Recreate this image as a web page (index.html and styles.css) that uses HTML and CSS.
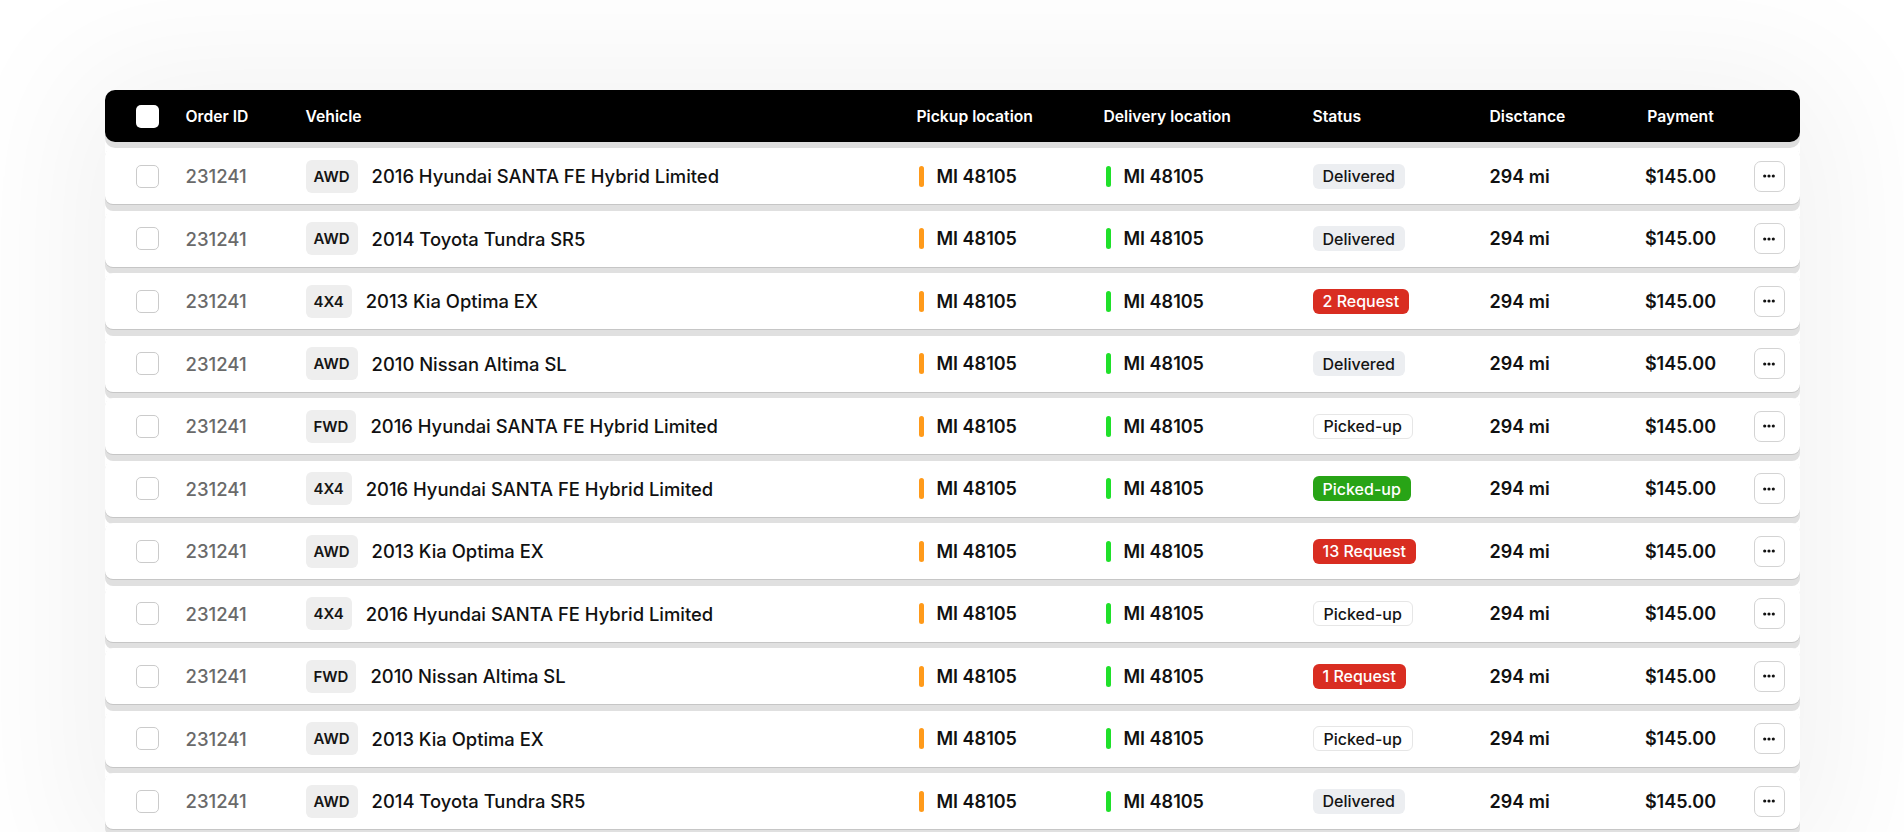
FILE: index.html
```html
<!DOCTYPE html>
<html lang="en">
<head>
<meta charset="utf-8">
<title>Orders</title>
<link rel="stylesheet" href="styles.css">
</head>
<body>
<div class="table">
  <div class="thead grid">
    <div class="cell"><span class="check check-head"></span></div>
    <div class="cell">Order ID</div>
    <div class="cell">Vehicle</div>
    <div class="cell">Pickup location</div>
    <div class="cell">Delivery location</div>
    <div class="cell">Status</div>
    <div class="cell">Disctance</div>
    <div class="cell center">Payment</div>
    <div class="cell"></div>
  </div>

  <div class="row grid">
    <div class="cell"><span class="check"></span></div>
    <div class="cell id">231241</div>
    <div class="cell vehicle"><span class="drive">AWD</span><span class="model">2016 Hyundai SANTA FE Hybrid Limited</span></div>
    <div class="cell loc"><span class="bar bar-pickup"></span>MI 48105</div>
    <div class="cell loc"><span class="bar bar-delivery"></span>MI 48105</div>
    <div class="cell"><span class="status status-delivered">Delivered</span></div>
    <div class="cell val">294 mi</div>
    <div class="cell val center">$145.00</div>
    <div class="cell end"><button class="more"><svg width="12" height="4" viewBox="0 0 12 4"><circle cx="1.7" cy="2" r="1.6"/><circle cx="6" cy="2" r="1.6"/><circle cx="10.3" cy="2" r="1.6"/></svg></button></div>
  </div>

  <div class="row grid">
    <div class="cell"><span class="check"></span></div>
    <div class="cell id">231241</div>
    <div class="cell vehicle"><span class="drive">AWD</span><span class="model">2014 Toyota Tundra SR5</span></div>
    <div class="cell loc"><span class="bar bar-pickup"></span>MI 48105</div>
    <div class="cell loc"><span class="bar bar-delivery"></span>MI 48105</div>
    <div class="cell"><span class="status status-delivered">Delivered</span></div>
    <div class="cell val">294 mi</div>
    <div class="cell val center">$145.00</div>
    <div class="cell end"><button class="more"><svg width="12" height="4" viewBox="0 0 12 4"><circle cx="1.7" cy="2" r="1.6"/><circle cx="6" cy="2" r="1.6"/><circle cx="10.3" cy="2" r="1.6"/></svg></button></div>
  </div>

  <div class="row grid">
    <div class="cell"><span class="check"></span></div>
    <div class="cell id">231241</div>
    <div class="cell vehicle"><span class="drive">4X4</span><span class="model">2013 Kia Optima EX</span></div>
    <div class="cell loc"><span class="bar bar-pickup"></span>MI 48105</div>
    <div class="cell loc"><span class="bar bar-delivery"></span>MI 48105</div>
    <div class="cell"><span class="status status-request">2 Request</span></div>
    <div class="cell val">294 mi</div>
    <div class="cell val center">$145.00</div>
    <div class="cell end"><button class="more"><svg width="12" height="4" viewBox="0 0 12 4"><circle cx="1.7" cy="2" r="1.6"/><circle cx="6" cy="2" r="1.6"/><circle cx="10.3" cy="2" r="1.6"/></svg></button></div>
  </div>

  <div class="row grid">
    <div class="cell"><span class="check"></span></div>
    <div class="cell id">231241</div>
    <div class="cell vehicle"><span class="drive">AWD</span><span class="model">2010 Nissan Altima SL</span></div>
    <div class="cell loc"><span class="bar bar-pickup"></span>MI 48105</div>
    <div class="cell loc"><span class="bar bar-delivery"></span>MI 48105</div>
    <div class="cell"><span class="status status-delivered">Delivered</span></div>
    <div class="cell val">294 mi</div>
    <div class="cell val center">$145.00</div>
    <div class="cell end"><button class="more"><svg width="12" height="4" viewBox="0 0 12 4"><circle cx="1.7" cy="2" r="1.6"/><circle cx="6" cy="2" r="1.6"/><circle cx="10.3" cy="2" r="1.6"/></svg></button></div>
  </div>

  <div class="row grid">
    <div class="cell"><span class="check"></span></div>
    <div class="cell id">231241</div>
    <div class="cell vehicle"><span class="drive">FWD</span><span class="model">2016 Hyundai SANTA FE Hybrid Limited</span></div>
    <div class="cell loc"><span class="bar bar-pickup"></span>MI 48105</div>
    <div class="cell loc"><span class="bar bar-delivery"></span>MI 48105</div>
    <div class="cell"><span class="status status-outline">Picked-up</span></div>
    <div class="cell val">294 mi</div>
    <div class="cell val center">$145.00</div>
    <div class="cell end"><button class="more"><svg width="12" height="4" viewBox="0 0 12 4"><circle cx="1.7" cy="2" r="1.6"/><circle cx="6" cy="2" r="1.6"/><circle cx="10.3" cy="2" r="1.6"/></svg></button></div>
  </div>

  <div class="row grid">
    <div class="cell"><span class="check"></span></div>
    <div class="cell id">231241</div>
    <div class="cell vehicle"><span class="drive">4X4</span><span class="model">2016 Hyundai SANTA FE Hybrid Limited</span></div>
    <div class="cell loc"><span class="bar bar-pickup"></span>MI 48105</div>
    <div class="cell loc"><span class="bar bar-delivery"></span>MI 48105</div>
    <div class="cell"><span class="status status-green">Picked-up</span></div>
    <div class="cell val">294 mi</div>
    <div class="cell val center">$145.00</div>
    <div class="cell end"><button class="more"><svg width="12" height="4" viewBox="0 0 12 4"><circle cx="1.7" cy="2" r="1.6"/><circle cx="6" cy="2" r="1.6"/><circle cx="10.3" cy="2" r="1.6"/></svg></button></div>
  </div>

  <div class="row grid">
    <div class="cell"><span class="check"></span></div>
    <div class="cell id">231241</div>
    <div class="cell vehicle"><span class="drive">AWD</span><span class="model">2013 Kia Optima EX</span></div>
    <div class="cell loc"><span class="bar bar-pickup"></span>MI 48105</div>
    <div class="cell loc"><span class="bar bar-delivery"></span>MI 48105</div>
    <div class="cell"><span class="status status-request">13 Request</span></div>
    <div class="cell val">294 mi</div>
    <div class="cell val center">$145.00</div>
    <div class="cell end"><button class="more"><svg width="12" height="4" viewBox="0 0 12 4"><circle cx="1.7" cy="2" r="1.6"/><circle cx="6" cy="2" r="1.6"/><circle cx="10.3" cy="2" r="1.6"/></svg></button></div>
  </div>

  <div class="row grid">
    <div class="cell"><span class="check"></span></div>
    <div class="cell id">231241</div>
    <div class="cell vehicle"><span class="drive">4X4</span><span class="model">2016 Hyundai SANTA FE Hybrid Limited</span></div>
    <div class="cell loc"><span class="bar bar-pickup"></span>MI 48105</div>
    <div class="cell loc"><span class="bar bar-delivery"></span>MI 48105</div>
    <div class="cell"><span class="status status-outline">Picked-up</span></div>
    <div class="cell val">294 mi</div>
    <div class="cell val center">$145.00</div>
    <div class="cell end"><button class="more"><svg width="12" height="4" viewBox="0 0 12 4"><circle cx="1.7" cy="2" r="1.6"/><circle cx="6" cy="2" r="1.6"/><circle cx="10.3" cy="2" r="1.6"/></svg></button></div>
  </div>

  <div class="row grid">
    <div class="cell"><span class="check"></span></div>
    <div class="cell id">231241</div>
    <div class="cell vehicle"><span class="drive">FWD</span><span class="model">2010 Nissan Altima SL</span></div>
    <div class="cell loc"><span class="bar bar-pickup"></span>MI 48105</div>
    <div class="cell loc"><span class="bar bar-delivery"></span>MI 48105</div>
    <div class="cell"><span class="status status-request">1 Request</span></div>
    <div class="cell val">294 mi</div>
    <div class="cell val center">$145.00</div>
    <div class="cell end"><button class="more"><svg width="12" height="4" viewBox="0 0 12 4"><circle cx="1.7" cy="2" r="1.6"/><circle cx="6" cy="2" r="1.6"/><circle cx="10.3" cy="2" r="1.6"/></svg></button></div>
  </div>

  <div class="row grid">
    <div class="cell"><span class="check"></span></div>
    <div class="cell id">231241</div>
    <div class="cell vehicle"><span class="drive">AWD</span><span class="model">2013 Kia Optima EX</span></div>
    <div class="cell loc"><span class="bar bar-pickup"></span>MI 48105</div>
    <div class="cell loc"><span class="bar bar-delivery"></span>MI 48105</div>
    <div class="cell"><span class="status status-outline">Picked-up</span></div>
    <div class="cell val">294 mi</div>
    <div class="cell val center">$145.00</div>
    <div class="cell end"><button class="more"><svg width="12" height="4" viewBox="0 0 12 4"><circle cx="1.7" cy="2" r="1.6"/><circle cx="6" cy="2" r="1.6"/><circle cx="10.3" cy="2" r="1.6"/></svg></button></div>
  </div>

  <div class="row grid">
    <div class="cell"><span class="check"></span></div>
    <div class="cell id">231241</div>
    <div class="cell vehicle"><span class="drive">AWD</span><span class="model">2014 Toyota Tundra SR5</span></div>
    <div class="cell loc"><span class="bar bar-pickup"></span>MI 48105</div>
    <div class="cell loc"><span class="bar bar-delivery"></span>MI 48105</div>
    <div class="cell"><span class="status status-delivered">Delivered</span></div>
    <div class="cell val">294 mi</div>
    <div class="cell val center">$145.00</div>
    <div class="cell end"><button class="more"><svg width="12" height="4" viewBox="0 0 12 4"><circle cx="1.7" cy="2" r="1.6"/><circle cx="6" cy="2" r="1.6"/><circle cx="10.3" cy="2" r="1.6"/></svg></button></div>
  </div>
</div>
</body>
</html>
```

FILE: styles.css
```css
html, body {
  margin: 0;
  padding: 0;
  background: #ffffff;
  overflow: hidden;
  height: 832px;
}

body {
  font-family: Inter, "Noto Sans", "Liberation Sans", sans-serif;
  color: #111111;
  -webkit-font-smoothing: antialiased;
}

.table {
  width: 1695px;
  margin: 90px auto 0;
  display: flex;
  flex-direction: column;
  gap: 6.5px;
  border-radius: 10px;
  box-shadow: 0 10px 140px 30px rgba(0, 0, 0, 0.055);
}

.grid {
  display: grid;
  grid-template-columns: 50px 120px 611px 187px 209px 177px 141px 100px 1fr;
  align-items: center;
  padding: 0 15px 0 31px;
  box-sizing: border-box;
}

.thead {
  height: 52px;
  background: #000000;
  color: #ffffff;
  border-radius: 10px;
  font-size: 15.7px;
  font-weight: 600;
  box-shadow: 0 6px 0 #dedede;
  margin-bottom: -0.5px;
}

.row {
  height: 56px;
  background: #ffffff;
  border-radius: 8px;
  font-size: 18px;
  font-weight: 600;
  box-shadow: 0 1px 0 #c6c6c6, 0 7px 0 #e0e0e0;
}

.cell {
  display: flex;
  align-items: center;
  white-space: nowrap;
}

.center {
  justify-content: center;
}

.end {
  justify-content: flex-end;
}

.check {
  width: 23px;
  height: 23px;
  box-sizing: border-box;
  border-radius: 5px;
  border: 1.5px solid #cbcbcb;
  background: #ffffff;
}

.check-head {
  border: none;
  border-radius: 5px;
}

.id {
  color: #6a6a6a;
  font-weight: 500;
  font-size: 18.5px;
}

.vehicle {
  gap: 14px;
}

.drive {
  display: inline-flex;
  align-items: center;
  justify-content: center;
  height: 33px;
  padding: 0 8px;
  background: #eeeeee;
  border-radius: 6px;
  font-size: 15px;
  font-weight: 600;
  color: #151515;
}

.model {
  color: #111111;
  font-weight: 500;
  font-size: 18.4px;
}

.loc {
  gap: 13px;
  padding-left: 2px;
}

.bar {
  width: 5px;
  height: 21px;
  border-radius: 3px;
}

.bar-pickup {
  background: #ff9a1a;
}

.bar-delivery {
  background: #1fe02a;
}

.status {
  display: inline-flex;
  align-items: center;
  height: 25px;
  padding: 0 10px;
  border-radius: 6px;
  font-size: 16px;
  font-weight: 500;
  box-sizing: border-box;
}

.status-delivered {
  background: #eceef1;
  color: #141414;
}

.status-outline {
  background: #ffffff;
  border: 1px solid #e6e6e6;
  color: #141414;
}

.status-green {
  background: #28a416;
  color: #ffffff;
}

.status-request {
  background: #d92d21;
  color: #ffffff;
}

.val {
  color: #111111;
}

.more {
  width: 31px;
  height: 31px;
  padding: 0;
  display: flex;
  align-items: center;
  justify-content: center;
  background: #ffffff;
  border: 1px solid #d3d3d3;
  border-radius: 7px;
}

.more svg {
  fill: #111111;
}
```
